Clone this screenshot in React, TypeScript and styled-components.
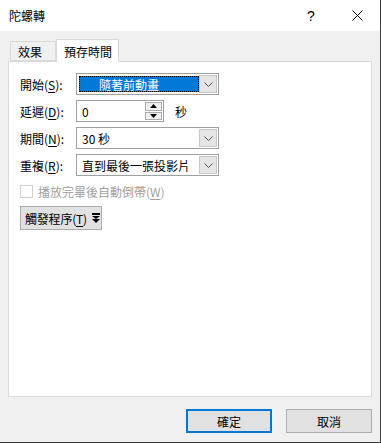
import React from "react";
import styled, { createGlobalStyle } from "styled-components";

const GlobalStyle = createGlobalStyle`
  html, body {
    margin: 0;
    padding: 0;
    background: #f0f0f0;
  }
  body {
    font-family: "Noto Sans CJK TC", "Noto Sans", sans-serif;
    font-size: 12px;
    color: #000;
  }
`;

//styled-components
const Window = styled.div`
  width: 381px;
  height: 443px;
  box-sizing: border-box;
  border-right: 1px solid #3c3c3c;
  border-bottom: 1px solid #3c3c3c;
  display: flex;
  flex-direction: column;
  background: #f0f0f0;
`;

const TitleBar = styled.div`
  height: 31px;
  flex-shrink: 0;
  background: #fff;
  display: flex;
  align-items: center;
`;

const Title = styled.span`
  flex: 1;
  padding-left: 9px;
  font-size: 12px;
  line-height: 1;
`;

const CaptionButton = styled.div`
  width: 46px;
  height: 31px;
  display: flex;
  align-items: center;
  justify-content: center;
  font-family: "Liberation Sans", sans-serif;
  font-size: 14px;
`;

const Body = styled.div`
  flex: 1;
  display: flex;
  flex-direction: column;
  padding: 8px 8px 9px 8px;
  min-height: 0;
`;

const TabRow = styled.div`
  display: flex;
  align-items: flex-end;
  height: 22px;
  padding-left: 2px;
  position: relative;
  z-index: 1;
`;

const Tab = styled.div<{ $active?: boolean }>`
  box-sizing: border-box;
  height: ${(p) => (p.$active ? "23px" : "20px")};
  width: ${(p) => (p.$active ? "63px" : "46px")};
  margin-bottom: ${(p) => (p.$active ? "-1px" : "0")};
  background: ${(p) => (p.$active ? "#fff" : "#f0f0f0")};
  border: 1px solid #d9d9d9;
  border-bottom: ${(p) => (p.$active ? "none" : "1px solid #d9d9d9")};
  display: flex;
  align-items: center;
  padding-left: 7px;
  padding-top: ${(p) => (p.$active ? "0" : "1px")};
  font-size: 12px;
`;

const Panel = styled.div`
  flex: 1;
  background: #fff;
  border: 1px solid #d9d9d9;
  display: flex;
  flex-direction: column;
  padding: 11px 0 0 11px;
`;

const FieldRow = styled.div`
  display: flex;
  align-items: center;
  height: 22px;
  margin-bottom: 5px;
`;

const Label = styled.span`
  width: 56px;
  font-size: 12px;
  u {
    text-decoration: underline;
    text-underline-offset: 2px;
  }
`;

const Combo = styled.div`
  box-sizing: border-box;
  width: 143px;
  height: 22px;
  border: 1px solid #a0a0a0;
  background: #fff;
  display: flex;
  align-items: stretch;
  padding: 1px;
`;

const ComboText = styled.div<{ $focused?: boolean }>`
  flex: 1;
  display: flex;
  align-items: center;
  padding-left: ${(p) => (p.$focused ? "20px" : "4px")};
  background: ${(p) => (p.$focused ? "#0078d7" : "#fff")};
  color: ${(p) => (p.$focused ? "#fff" : "#000")};
  outline: ${(p) => (p.$focused ? "1px dotted #000" : "none")};
  outline-offset: -1px;
  margin: ${(p) => (p.$focused ? "1px 0 1px 1px" : "0")};
  font-size: 12px;
`;

const ComboButton = styled.div`
  box-sizing: border-box;
  width: 18px;
  background: #e5e5e5;
  border: 1px solid #c8c8c8;
  display: flex;
  align-items: center;
  justify-content: center;
`;

const SpinBox = styled.div`
  box-sizing: border-box;
  width: 88px;
  height: 22px;
  border: 1px solid #a0a0a0;
  background: #fff;
  display: flex;
  padding: 1px;
`;

const SpinText = styled.div`
  flex: 1;
  display: flex;
  align-items: center;
  padding-left: 4px;
`;

const SpinButtons = styled.div`
  width: 17px;
  display: flex;
  flex-direction: column;
  gap: 1px;
`;

const SpinButton = styled.div`
  flex: 1;
  box-sizing: border-box;
  background: #f0f0f0;
  border: 1px solid #acacac;
  display: flex;
  align-items: center;
  justify-content: center;
`;

const Unit = styled.span`
  margin-left: 11px;
`;

const CheckRow = styled.div`
  display: flex;
  align-items: center;
  gap: 5px;
  margin-top: 4px;
  height: 13px;
  color: #a0a0a0;
  white-space: nowrap;
  u {
    text-underline-offset: 2px;
  }
`;

const CheckBox = styled.div`
  box-sizing: border-box;
  width: 13px;
  height: 13px;
  border: 1px solid #cfcfcf;
  background: #fff;
`;

const DropButton = styled.div`
  box-sizing: border-box;
  margin-top: 8px;
  width: 82px;
  height: 24px;
  background: #e1e1e1;
  border: 1px solid #adadad;
  display: flex;
  align-items: center;
  gap: 5px;
  padding-left: 4px;
  white-space: nowrap;
  letter-spacing: -0.2px;
  u {
    text-underline-offset: 2px;
  }
`;

const Footer = styled.div`
  display: flex;
  justify-content: flex-end;
  gap: 14px;
  margin-top: 12px;
  padding-right: 0;
`;

const DialogButton = styled.div<{ $primary?: boolean }>`
  box-sizing: border-box;
  width: 86px;
  height: 24px;
  background: #e1e1e1;
  border: ${(p) => (p.$primary ? "2px solid #0078d7" : "1px solid #adadad")};
  display: flex;
  align-items: center;
  justify-content: center;
`;

const Chevron = () => (
  <svg width="9" height="5" viewBox="0 0 9 5">
    <path d="M0.5 0.5 L4.5 4.5 L8.5 0.5" fill="none" stroke="#555" strokeWidth="1" />
  </svg>
);

const Tri = ({ up }: { up?: boolean }) => (
  <svg width="7" height="4" viewBox="0 0 7 4">
    <path d={up ? "M0 4 L3.5 0 L7 4 Z" : "M0 0 L3.5 4 L7 0 Z"} fill="#000" />
  </svg>
);

const DoubleArrow = () => (
  <svg width="8" height="10" viewBox="0 0 8 10" style={{ flexShrink: 0 }}>
    <rect x="0" y="0" width="8" height="2" fill="#000" />
    <path d="M0 3 L4 6 L8 3 Z" fill="#000" />
    <path d="M0 6 L4 10 L8 6 Z" fill="#000" />
  </svg>
);

const CloseIcon = () => (
  <svg width="11" height="11" viewBox="0 0 11 11">
    <path d="M0.5 0.5 L10.5 10.5 M10.5 0.5 L0.5 10.5" stroke="#000" strokeWidth="1" />
  </svg>
);

const App: React.FC = () => {
  return (
    <>
      <GlobalStyle />
      <Window>
        <TitleBar>
          <Title>陀螺轉</Title>
          <CaptionButton>?</CaptionButton>
          <CaptionButton>
            <CloseIcon />
          </CaptionButton>
        </TitleBar>
        <Body>
          <TabRow>
            <Tab>效果</Tab>
            <Tab $active>預存時間</Tab>
          </TabRow>
          <Panel>
            <FieldRow>
              <Label>
                開始(<u>S</u>):
              </Label>
              <Combo>
                <ComboText $focused>隨著前動畫</ComboText>
                <ComboButton>
                  <Chevron />
                </ComboButton>
              </Combo>
            </FieldRow>
            <FieldRow>
              <Label>
                延遲(<u>D</u>):
              </Label>
              <SpinBox>
                <SpinText>0</SpinText>
                <SpinButtons>
                  <SpinButton>
                    <Tri up />
                  </SpinButton>
                  <SpinButton>
                    <Tri />
                  </SpinButton>
                </SpinButtons>
              </SpinBox>
              <Unit>秒</Unit>
            </FieldRow>
            <FieldRow>
              <Label>
                期間(<u>N</u>):
              </Label>
              <Combo>
                <ComboText>30 秒</ComboText>
                <ComboButton>
                  <Chevron />
                </ComboButton>
              </Combo>
            </FieldRow>
            <FieldRow>
              <Label>
                重複(<u>R</u>):
              </Label>
              <Combo>
                <ComboText>直到最後一張投影片</ComboText>
                <ComboButton>
                  <Chevron />
                </ComboButton>
              </Combo>
            </FieldRow>
            <CheckRow>
              <CheckBox />
              <span>
                播放完畢後自動倒帶(<u>W</u>)
              </span>
            </CheckRow>
            <DropButton>
              <span>
                觸發程序(<u>T</u>)
              </span>
              <DoubleArrow />
            </DropButton>
          </Panel>
          <Footer>
            <DialogButton $primary>確定</DialogButton>
            <DialogButton>取消</DialogButton>
          </Footer>
        </Body>
      </Window>
    </>
  );
};

export default App;
